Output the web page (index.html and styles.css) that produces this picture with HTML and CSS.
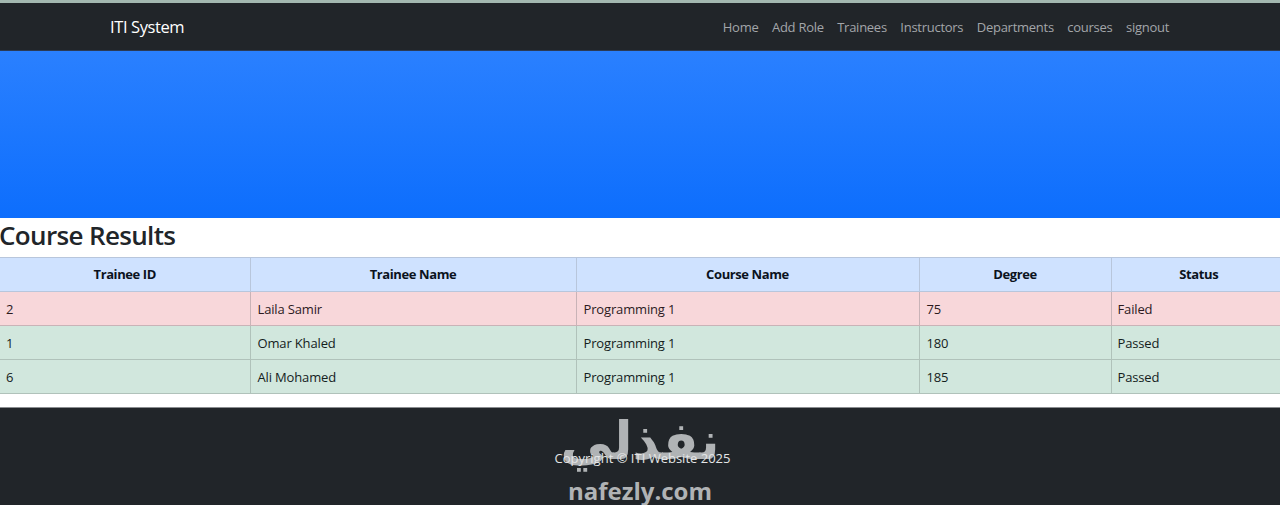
FILE: index.html
```html
<!DOCTYPE html>
<html lang="en">
<head>
<meta charset="utf-8">
<title>Course Results</title>
<link rel="stylesheet" href="styles.css">
</head>
<body>
<div class="topstrip"></div>
<nav class="navbar">
  <a class="brand" href="#">ITI System</a>
  <ul class="navlinks">
    <li><a href="#">Home</a></li>
    <li><a href="#">Add Role</a></li>
    <li><a href="#">Trainees</a></li>
    <li><a href="#">Instructors</a></li>
    <li><a href="#">Departments</a></li>
    <li><a href="#">courses</a></li>
    <li><a href="#">signout</a></li>
  </ul>
</nav>
<header class="hero"></header>
<main>
  <h1 class="title">Course Results</h1>
  <table class="results">
    <colgroup>
      <col class="c1"><col class="c2"><col class="c3"><col class="c4"><col class="c5">
    </colgroup>
    <thead>
      <tr><th>Trainee ID</th><th>Trainee Name</th><th>Course Name</th><th>Degree</th><th class="status-head">Status</th></tr>
    </thead>
    <tbody>
      <tr class="failed"><td>2</td><td>Laila Samir</td><td>Programming 1</td><td>75</td><td>Failed</td></tr>
      <tr class="passed"><td>1</td><td>Omar Khaled</td><td>Programming 1</td><td>180</td><td>Passed</td></tr>
      <tr class="passed"><td>6</td><td>Ali Mohamed</td><td>Programming 1</td><td>185</td><td>Passed</td></tr>
    </tbody>
  </table>
</main>
<footer class="footer">
  <p class="copy">Copyright © ITI Website 2025</p>
  <div class="watermark">
    <span class="wm-ar" lang="ar" dir="rtl">نفذلي</span>
    <span class="wm-en">nafezly.com</span>
  </div>
</footer>
</body>
</html>
```
FILE: styles.css
```css
* { box-sizing: border-box; }
html, body { margin: 0; padding: 0; }
body {
  font-family: "Open Sans", "Noto Sans", "DejaVu Sans", sans-serif;
  color: #212529;
  background: #fff;
  height: 505px;
  overflow: hidden;
}
.topstrip { height: 3px; background: #a3b8b0; }
.navbar {
  height: 48px;
  background: #212529;
  border-bottom: 1px solid #2b3a55;
  display: flex;
  align-items: center;
  justify-content: space-between;
  padding: 0 111px 0 110px;
}
.brand { color: #fff; font-size: 16.5px; line-height: 22px; text-decoration: none; letter-spacing: -0.4px; padding-top: 1px; }
.navlinks { list-style: none; margin: 0; padding: 0; display: flex; gap: 13.5px; }
.navlinks a { color: #a3a6a9; font-size: 13px; line-height: 18px; display: block; text-decoration: none; letter-spacing: -0.27px; }
.hero {
  height: 167px;
  background: linear-gradient(180deg, #2a80ff 0%, #0d6efd 100%);
}
.title {
  margin: 0 0 0 -1px;
  height: 39px;
  font-size: 26px;
  font-weight: 600;
  line-height: 35px;
  letter-spacing: -0.65px;
  color: #212529;
}
.results {
  width: 1280px;
  table-layout: fixed;
  border-collapse: collapse;
  font-size: 13px;
}
.c1 { width: 250px; }
.c2 { width: 326px; }
.c3 { width: 343px; }
.c4 { width: 192px; }
.c5 { width: 169px; }
.results th, .results td {
  height: 34px;
  padding: 0 7px;
  border: 1px solid #bfc5cc;
  white-space: nowrap;
}
.results td { letter-spacing: -0.15px; }
.results td:first-child { padding-left: 6px; }
.results td:last-child { padding-left: 6px; }
.results th:first-child, .results td:first-child { border-left: 0; }
.results th:last-child, .results td:last-child { border-right: 0; }
.results th {
  background: #cfe2ff;
  color: #0b1220;
  font-weight: 700;
  text-align: center;
  border-color: #b8c6dc;
  letter-spacing: -0.4px;
  padding-bottom: 2px;
}
.results .status-head { padding-left: 13px; }
.failed td { background: #f8d7da; color: #2c1a1e; border-color: #c9b3b7; }
.passed td { background: #d1e7dd; color: #14211c; border-color: #b0c2ba; }
.footer {
  position: relative;
  margin-top: 13px;
  height: 98px;
  background: #212529;
  border-top: 1px solid #8a8d90;
  text-align: center;
  overflow: hidden;
}
.copy {
  position: relative;
  z-index: 1;
  margin: 41px 0 0;
  padding-left: 5px;
  color: #e4e5e6;
  font-size: 13px;
  line-height: 18px;
}
.watermark {
  position: absolute;
  left: 0;
  right: 0;
  top: 0;
  height: 98px;
  color: #b0b3b5;
}
.wm-ar {
  position: absolute;
  left: 0;
  right: 0;
  top: -2px;
  text-align: center;
  font-family: "DejaVu Sans", sans-serif;
  font-weight: 700;
  font-size: 52px;
  line-height: 70px;
}
.wm-en {
  position: absolute;
  left: 0;
  right: 0;
  top: 69px;
  text-align: center;
  font-family: "Open Sans", sans-serif;
  font-weight: 700;
  font-size: 24px;
  line-height: 28px;
}
```
